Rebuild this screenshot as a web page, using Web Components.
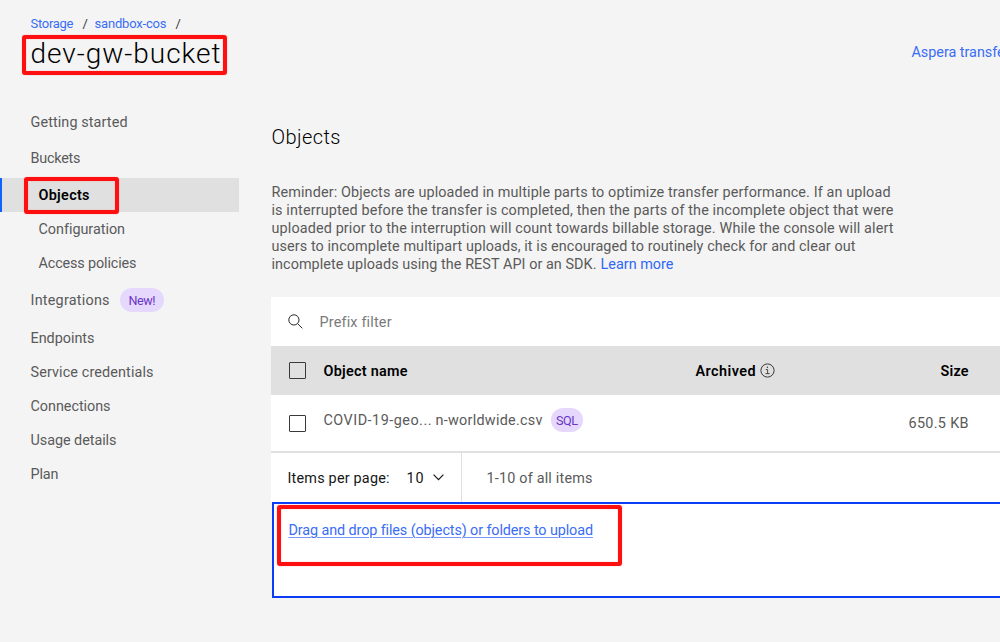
<!DOCTYPE html>
<html lang="en">
<head>
<meta charset="utf-8">
<title>dev-gw-bucket</title>
<style>
html,body{margin:0;height:100%;overflow:hidden;background:#f4f4f4}
body{font:14.4px/18px Roboto,"Noto Sans",sans-serif;color:#5a5a5a}
</style>
</head>
<body>
<cos-page></cos-page>
<script>
const define = (name, html, setup) => {
  const t = document.createElement('template');
  t.innerHTML = html;
  customElements.define(name, class extends HTMLElement {
    constructor() {
      super();
      this.attachShadow({mode: 'open'}).append(t.content.cloneNode(true));
    }
    connectedCallback() { if (setup) setup.call(this); }
  });
};

/* One line of text tracked out to a given width. */
define('fit-text', `<style>:host{display:inline-block;white-space:pre;flex:none;padding:1px .5px 0;margin-bottom:-1px}</style><slot></slot>`, function () {
  const target = +this.getAttribute('w');
  this.style.letterSpacing = '0px';
  const natural = this.getBoundingClientRect().width;
  this.style.letterSpacing = (target - natural) / (this.textContent.length - 1) + 'px';
  this.style.width = target - 1 + 'px';
});

/* Annotation frame laid over what it highlights. */
define('mark-frame', `<style>:host{position:absolute;box-sizing:border-box;border:4px solid #ff1010;border-radius:3px;box-shadow:0 0 1px #ff6060,inset 0 0 1px #ff6060;pointer-events:none;z-index:2}</style>`);

define('pill-tag', `<style>:host{display:inline-flex;box-sizing:border-box;height:24px;border-radius:12px;background:#e5d8fc;color:#6a35c4;align-items:center;justify-content:center;font-size:12.6px;flex:none}</style><slot></slot>`);

define('check-box', `<style>:host{display:block;box-sizing:border-box;width:17px;height:17px;border:1px solid #393939;border-radius:1px;flex:none}</style>`);

define('page-header', `<style>
:host{display:block;position:relative;height:105px;box-sizing:border-box;padding:14px 0 0 30px}
nav{display:flex;height:18px;font-size:13px;color:#393939}
.link{color:#3a6df5}
.s1{margin-left:8px;margin-right:7px}.s2{margin-left:8px}
.row{display:flex;height:38px;align-items:center;margin-top:1px}
h1{margin:0;padding-top:2px;font-weight:300;font-size:28px;line-height:38px;color:#000;width:881px;flex:none}
mark-frame{left:22px;top:35px;width:205px;height:40px}
</style>
<nav><fit-text class="link" w="44">Storage</fit-text><fit-text class="s1" w="5">/</fit-text><fit-text class="link" w="73">sandbox-cos</fit-text><fit-text class="s2" w="5">/</fit-text></nav>
<div class="row"><h1><fit-text w="191">dev-gw-bucket</fit-text></h1><fit-text class="link" w="99">Aspera transfer</fit-text></div>
<mark-frame></mark-frame>`);

define('nav-item', `<style>
:host{display:flex;height:34px;align-items:center;padding-left:30px;box-sizing:border-box;position:relative}
:host([sub]){padding-left:38px}
:host([active]){background:#e0e0e0;border-left:2px solid #0f62fe;padding-left:36px;font-weight:600;color:#000}
</style><slot></slot>`);

define('side-nav', `<style>
:host{display:block;width:239px;flex:none}
.a{margin-bottom:2px}.b{margin-bottom:3px}
.i{height:40px}.e{margin-top:1px}pill-tag{width:44px;margin-left:10px}
mark-frame{left:22px;top:-1px;width:95px;height:37px}
</style>
<nav-item class="a"><fit-text w="98">Getting started</fit-text></nav-item>
<nav-item class="b"><fit-text w="51">Buckets</fit-text></nav-item>
<nav-item active><fit-text w="52">Objects</fit-text><mark-frame></mark-frame></nav-item>
<nav-item sub><fit-text w="87">Configuration</fit-text></nav-item>
<nav-item sub><fit-text w="99">Access policies</fit-text></nav-item>
<nav-item class="i"><fit-text w="80">Integrations</fit-text><pill-tag><fit-text w="28">New!</fit-text></pill-tag></nav-item>
<nav-item class="e"><fit-text w="65">Endpoints</fit-text></nav-item>
<nav-item><fit-text w="124">Service credentials</fit-text></nav-item>
<nav-item><fit-text w="81">Connections</fit-text></nav-item>
<nav-item><fit-text w="87">Usage details</fit-text></nav-item>
<nav-item><fit-text w="29">Plan</fit-text></nav-item>`);

define('objects-table', `<style>
:host{display:block;background:#fff;color:#000}
.r{display:flex;align-items:center;box-sizing:border-box;position:relative}
.search{height:49px;padding-left:17px;color:#7a7a7a}
.search svg{margin-right:16px}
.head{height:49px;background:#e0e0e0;padding-left:18px;font-weight:600}
.head check-box,.body check-box{margin-right:17px}
.head check-box{margin-top:-1px}
.name{width:372px;display:flex;align-items:center}
.arch{width:245px;display:flex;align-items:center}
.arch svg{margin-left:4px;margin-top:-1px}
.body{height:58px;padding-left:18px;border-bottom:2px solid #e0e0e0;color:#5a5a5a}
.body .name{width:585px;padding-bottom:6px}
.body pill-tag{width:32px;margin-left:8px}
.page{height:49px;align-items:stretch}
.page>div{display:flex;align-items:center}
.per{box-sizing:border-box;width:191px;padding-left:16px;border-right:1px solid #e0e0e0;color:#161616}
.of{padding-left:24px;color:#5a5a5a}
</style>
<div class="r search"><svg width="15" height="15" viewBox="0 0 15 15" fill="none" stroke="#262626"><circle cx="5.9" cy="5.9" r="5.1"/><path d="M9.6 9.6l4.7 4.7"/></svg><fit-text w="72">Prefix filter</fit-text></div>
<div class="r head"><check-box></check-box><div class="name"><fit-text w="85">Object name</fit-text></div><div class="arch"><fit-text w="61">Archived</fit-text><svg width="15" height="15" viewBox="0 0 15 15" fill="none" stroke="#393939"><circle cx="7.5" cy="7.5" r="6.6"/><path d="M5.8 6.5h1.8v4M5.5 10.6h4.2" stroke-width=".9"/><circle cx="7.4" cy="4.2" r=".7" fill="#393939" stroke="none"/></svg></div><fit-text w="29">Size</fit-text></div>
<div class="r body"><check-box></check-box><div class="name"><fit-text w="109">COVID-19-geo...</fit-text><fit-text w="108" style="margin-left:3px">n-worldwide.csv</fit-text><pill-tag><fit-text w="23">SQL</fit-text></pill-tag></div><fit-text w="61">650.5 KB</fit-text></div>
<div class="r page"><div class="per"><fit-text w="103">Items per page:</fit-text><fit-text w="18" style="margin-left:16px;margin-right:9px">10</fit-text><svg width="11" height="7" viewBox="0 0 11 7" fill="none" stroke="#161616" stroke-width="1.2"><path d="M.6.7l4.9 5 4.9-5"/></svg></div><div class="of"><fit-text w="107">1-10 of all items</fit-text></div></div>`);

define('drop-zone', `<style>
:host{display:block;box-sizing:border-box;position:relative;height:96px;margin-left:1px;border:2px solid #0b3df5;border-right:0;background:#fff;padding:17px 0 0 14px}
fit-text{color:#3a6df5;text-decoration:underline 1px #7d97f5;text-underline-offset:2px}
mark-frame{left:3px;top:1px;width:345px;height:61px}
</style><fit-text w="305">Drag and drop files (objects) or folders to upload</fit-text><mark-frame></mark-frame>`);

define('objects-view', `<style>
:host{display:block;width:729px;margin-left:32px;flex:none}
h2{margin:0;padding-top:18px;font-size:20px;line-height:26px;font-weight:300;color:#000}
.note{display:flex;flex-direction:column;align-items:flex-start;padding:33px 0 24px}
.last{display:flex}
.link{color:#2f67f5;margin-left:3px}
</style>
<h2><fit-text w="70">Objects</fit-text></h2>
<div class="note">
<fit-text w="620">Reminder: Objects are uploaded in multiple parts to optimize transfer performance. If an upload</fit-text>
<fit-text w="623">is interrupted before the transfer is completed, then the parts of the incomplete object that were</fit-text>
<fit-text w="623">uploaded prior to the interruption will count towards billable storage. While the console will alert</fit-text>
<fit-text w="585">users to incomplete multipart uploads, it is encouraged to routinely check for and clear out</fit-text>
<span class="last"><fit-text w="326">incomplete uploads using the REST API or an SDK.</fit-text><fit-text class="link" w="74">Learn more</fit-text></span>
</div>
<objects-table></objects-table><drop-zone></drop-zone>`);

define('cos-page', `<style>
:host{display:block;width:1000px;height:642px;overflow:hidden;background:#f4f4f4}
main{display:flex}
</style><page-header></page-header><main><side-nav></side-nav><objects-view></objects-view></main>`);
</script>
</body>
</html>
